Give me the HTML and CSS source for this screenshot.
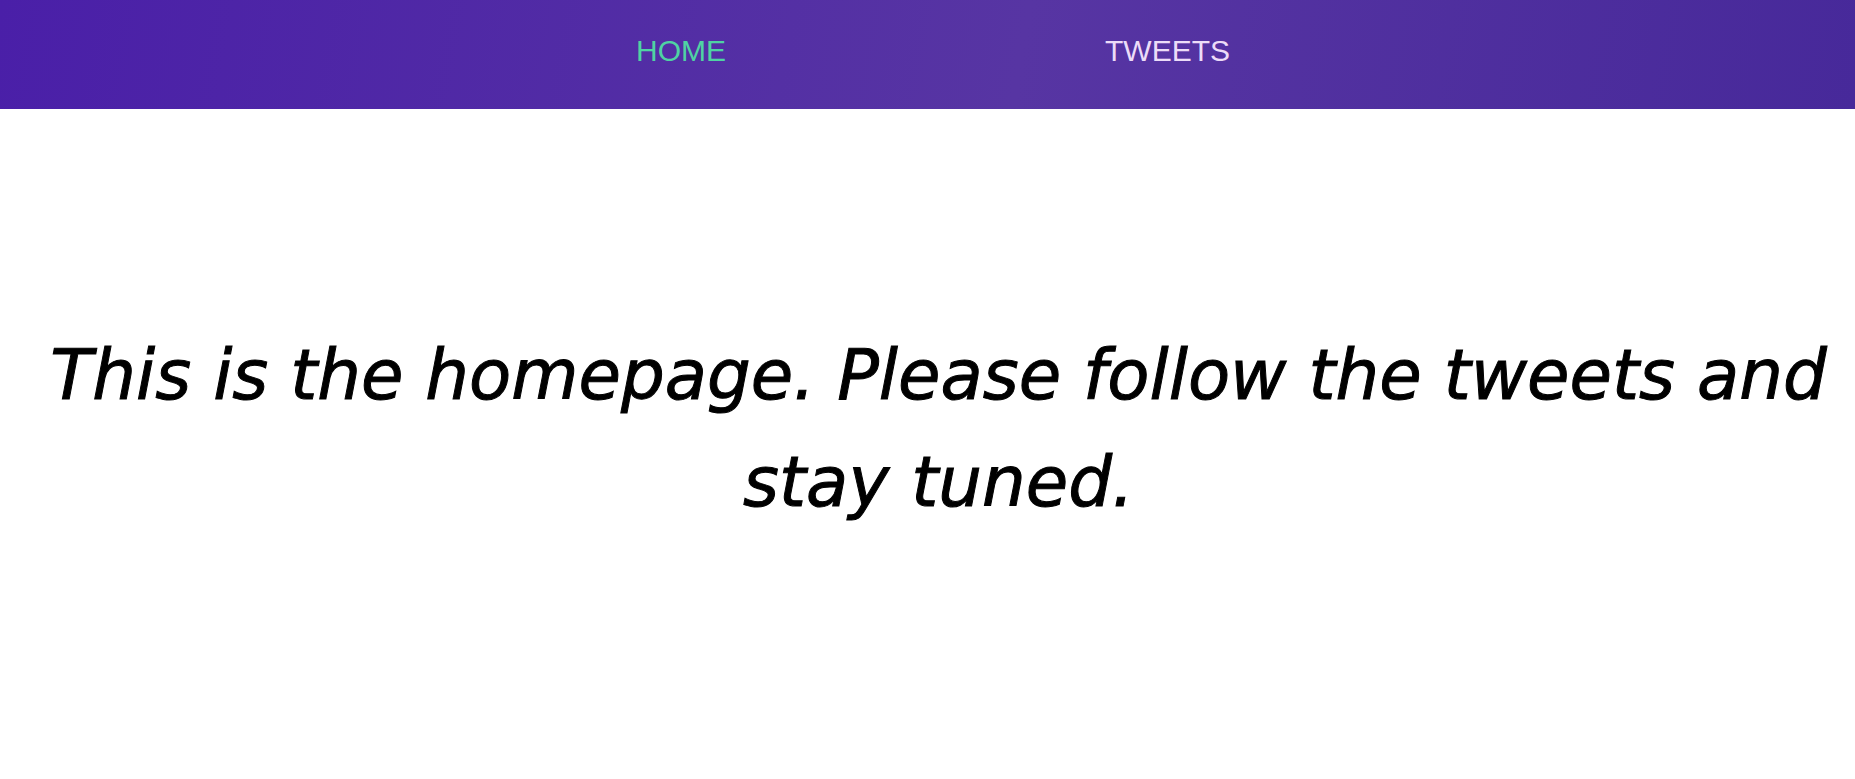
FILE: index.html
```html
<!DOCTYPE html>
<html lang="en">
<head>
<meta charset="utf-8">
<title>Home</title>
<link rel="stylesheet" href="styles.css">
</head>
<body>
<header class="topbar">
  <nav class="nav">
    <a class="nav-link active" href="#">HOME</a>
    <a class="nav-link" href="#">TWEETS</a>
  </nav>
</header>
<main class="main">
  <h1 class="intro">This is the homepage. Please follow the tweets and stay tuned.</h1>
</main>
</body>
</html>
```
FILE: styles.css
```css
html, body {
  margin: 0;
  padding: 0;
  background: #ffffff;
}
body {
  font-family: "Liberation Sans", Arial, sans-serif;
}
.topbar {
  height: 109px;
  background: linear-gradient(100deg, #4a1fa8 0%, #5735a3 55%, #47299a 100%);
  display: flex;
  align-items: center;
  justify-content: center;
}
.nav {
  display: flex;
  gap: 379px;
  padding-left: 11px;
  padding-bottom: 8px;
}
.nav-link {
  font-size: 30px;
  color: #ecdcf8;
  text-decoration: none;
}
.nav-link.active {
  color: #4fd3a3;
}
.main {
  display: flex;
  justify-content: center;
  padding: 213px 10px 0 32px;
}
.intro {
  margin: 0;
  font-family: "Comic Sans MS", "DejaVu Sans", sans-serif;
  font-style: italic;
  font-weight: normal;
  font-size: 69px;
  line-height: 107px;
  text-align: center;
  color: #000000;
  -webkit-text-stroke: 1px #000000;
}
```
